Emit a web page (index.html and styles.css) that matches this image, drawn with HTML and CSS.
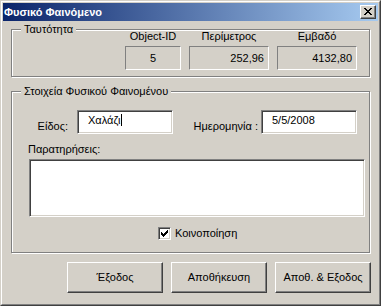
FILE: index.html
```html
<!DOCTYPE html>
<html lang="el">
<head>
    <meta charset="UTF-8">
    <title>Φυσικό Φαινόμενο</title>
    <link rel="stylesheet" href="styles.css">
</head>
<body>
    <div class="window">
        <div class="frame">
            <div class="titlebar">
                <span class="title">Φυσικό Φαινόμενο</span>
                <div class="close-btn">
                    <svg width="8" height="7" viewBox="0 0 8 7" shape-rendering="crispEdges">
                        <rect x="0" y="0" width="2" height="1"/><rect x="6" y="0" width="2" height="1"/>
                        <rect x="1" y="1" width="2" height="1"/><rect x="5" y="1" width="2" height="1"/>
                        <rect x="2" y="2" width="4" height="1"/>
                        <rect x="3" y="3" width="2" height="1"/>
                        <rect x="2" y="4" width="4" height="1"/>
                        <rect x="1" y="5" width="2" height="1"/><rect x="5" y="5" width="2" height="1"/>
                        <rect x="0" y="6" width="2" height="1"/><rect x="6" y="6" width="2" height="1"/>
                    </svg>
                </div>
            </div>

            <div class="client">
                <div class="group group-id">
                    <span class="legend">Ταυτότητα</span>
                    <div class="id-row">
                        <div class="stat stat-small">
                            <div class="stat-label">Object-ID</div>
                            <div class="stat-value center">5</div>
                        </div>
                        <div class="stat">
                            <div class="stat-label">Περίμετρος</div>
                            <div class="stat-value">252,96</div>
                        </div>
                        <div class="stat">
                            <div class="stat-label">Εμβαδό</div>
                            <div class="stat-value">4132,80</div>
                        </div>
                    </div>
                </div>

                <div class="group group-info">
                    <span class="legend">Στοιχεία Φυσικού Φαινομένου</span>
                    <div class="field-row">
                        <label class="field-label label-kind">Είδος:</label>
                        <div class="textbox">Χαλάζι<span class="caret"></span></div>
                        <label class="field-label label-date">Ημερομηνία :</label>
                        <div class="textbox">5/5/2008</div>
                    </div>
                    <div class="notes-label">Παρατηρήσεις:</div>
                    <div class="notes"></div>
                    <div class="check-row">
                        <span class="checkbox">
                            <svg width="9" height="9" viewBox="0 0 9 9" shape-rendering="crispEdges">
                                <rect x="1" y="3" width="1" height="3"/>
                                <rect x="2" y="4" width="1" height="3"/>
                                <rect x="3" y="5" width="1" height="3"/>
                                <rect x="4" y="4" width="1" height="3"/>
                                <rect x="5" y="3" width="1" height="3"/>
                                <rect x="6" y="2" width="1" height="3"/>
                                <rect x="7" y="1" width="1" height="3"/>
                            </svg>
                        </span>
                        <span class="check-text">Κοινοποίηση</span>
                    </div>
                </div>

                <div class="buttons">
                    <button class="btn">Έξοδος</button>
                    <button class="btn">Αποθήκευση</button>
                    <button class="btn">Αποθ. &amp; Εξοδος</button>
                </div>
            </div>
        </div>
    </div>
</body>
</html>
```

FILE: styles.css
```css
* { margin: 0; padding: 0; box-sizing: border-box; }
body {
    font-family: 'Liberation Sans', Arial, sans-serif;
    font-size: 11px;
    line-height: 13px;
    color: #000;
    background: #d4d0c8;
}
.window {
    width: 381px;
    height: 306px;
    border: 1px solid;
    border-color: #d4d0c8 #404040 #404040 #d4d0c8;
    background: #d4d0c8;
}
.frame {
    height: 100%;
    border: 1px solid;
    border-color: #fff #808080 #808080 #fff;
    padding: 1px;
}
.titlebar {
    display: flex;
    justify-content: space-between;
    align-items: flex-start;
    height: 18px;
    background: linear-gradient(to right, #0a246a, #a6caf0);
}
.title {
    color: #fff;
    font-weight: bold;
    line-height: 18px;
    padding-left: 1px;
}
.close-btn {
    width: 16px;
    height: 14px;
    margin: 2px 2px 0 0;
    background: #d4d0c8;
    border: 1px solid;
    border-color: #fff #404040 #404040 #fff;
    box-shadow: inset -1px -1px 0 #808080;
    padding: 2px 0 0 3px;
}
.close-btn svg { display: block; }
.client {
    padding: 8px 0 0 8px;
}

/* etched group boxes */
.group {
    position: relative;
    width: 359px;
    border: 1px solid #808080;
    box-shadow: 1px 1px 0 #fff, inset 1px 1px 0 #fff;
}
.legend {
    position: absolute;
    top: -7px;
    left: 9px;
    padding: 0 3px;
    background: #d4d0c8;
}
.group-id { height: 48px; }
.id-row {
    display: flex;
    justify-content: flex-end;
    gap: 8px;
    padding-right: 12px;
}
.stat {
    width: 80px;
    display: flex;
    flex-direction: column;
    align-items: center;
}
.stat-small { width: 56px; }
.stat-label { margin-bottom: 3px; }
.stat-value {
    width: 100%;
    height: 24px;
    border: 1px solid;
    border-color: #808080 #fff #fff #808080;
    text-align: right;
    padding: 5px 4px 0 0;
}
.stat-value.center { text-align: center; padding-right: 0; }

.group-info {
    height: 162px;
    margin-top: 14px;
    padding-top: 18px;
}
.field-row {
    display: flex;
    align-items: flex-start;
}
.field-label {
    margin-top: 10px;
    text-align: right;
}
.label-kind { width: 56px; margin-right: 9px; }
.label-date { width: 85px; margin-right: 3px; }
.textbox {
    width: 96px;
    height: 24px;
    background: #fff;
    border: 1px solid;
    border-color: #808080 #fff #fff #808080;
    box-shadow: inset 1px 1px 0 #404040, inset -1px -1px 0 #d4d0c8;
    padding: 3px 0 0 10px;
}
.caret {
    display: inline-block;
    width: 1px;
    height: 12px;
    background: #000;
    vertical-align: -2px;
    margin-left: 1px;
}
.notes-label {
    margin: 9px 0 0 16px;
}
.notes {
    width: 336px;
    height: 58px;
    margin: 3px 0 0 17px;
    background: #fff;
    border: 1px solid;
    border-color: #808080 #fff #fff #808080;
    box-shadow: inset 1px 1px 0 #404040, inset -1px -1px 0 #d4d0c8;
}
.check-row {
    display: flex;
    align-items: flex-start;
    margin: 10px 0 0 146px;
}
.checkbox {
    width: 13px;
    height: 13px;
    background: #fff;
    border: 1px solid;
    border-color: #808080 #fff #fff #808080;
    box-shadow: inset 1px 1px 0 #404040, inset -1px -1px 0 #d4d0c8;
    padding: 1px;
}
.checkbox svg { display: block; }
.check-text { margin-left: 4px; }

.buttons {
    display: flex;
    justify-content: flex-end;
    gap: 8px;
    margin-top: 9px;
    padding-right: 7px;
}
.btn {
    width: 96px;
    height: 31px;
    font: inherit;
    color: #000;
    background: #d4d0c8;
    border: 1px solid;
    border-color: #fff #404040 #404040 #fff;
    box-shadow: inset -1px -1px 0 #808080;
}
```
